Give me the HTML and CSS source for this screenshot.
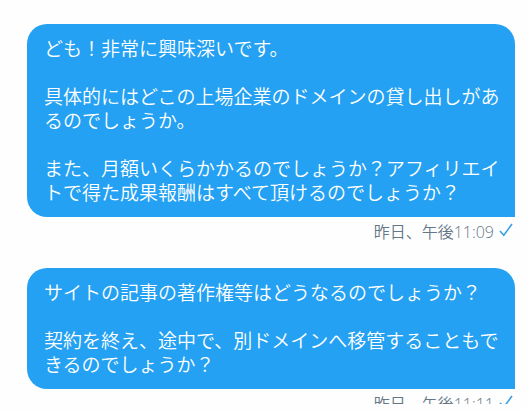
FILE: index.html
```html
<!DOCTYPE html>
<html lang="ja">
<head>
<meta charset="utf-8">
<meta name="viewport" content="width=device-width, initial-scale=1">
<title>メッセージ</title>
<link rel="stylesheet" href="styles.css">
</head>
<body>
<main class="thread">
  <article class="message">
    <div class="bubble">
      <p>ども！非常に興味深いです。</p>
      <p>具体的にはどこの上場企業のドメインの貸し出しがあるのでしょうか。</p>
      <p>また、月額いくらかかるのでしょうか？アフィリエイトで得た成果報酬はすべて頂けるのでしょうか？</p>
    </div>
    <footer class="meta">
      <time>昨日、午後<span class="clock">11:09</span></time>
      <svg class="check" viewBox="0 0 14 14" aria-hidden="true"><path d="M1 8 4.8 12.2 13 1"/></svg>
    </footer>
  </article>
  <article class="message">
    <div class="bubble">
      <p>サイトの記事の著作権等はどうなるのでしょうか？</p>
      <p>契約を終え、途中で、別ドメインへ移管することもできるのでしょうか？</p>
    </div>
    <footer class="meta">
      <time>昨日、午後<span class="clock">11:11</span></time>
      <svg class="check" viewBox="0 0 14 14" aria-hidden="true"><path d="M1 8 4.8 12.2 13 1"/></svg>
    </footer>
  </article>
</main>
</body>
</html>
```
FILE: styles.css
```css
* {
  box-sizing: border-box;
}

body {
  margin: 0;
  background: #fefefe;
  font-family: "Noto Sans CJK JP", sans-serif;
}

.thread {
  height: calc(100vh - 6px);
  overflow: hidden;
  padding: 24px 12px 0 27px;
}

.message {
  margin-bottom: 26px;
}

.bubble {
  display: grid;
  gap: 24px;
  padding: 12px 14px 13px 17px;
  border-radius: 20px 20px 0 20px;
  background: #24a1f2;
  color: #fff;
  font-size: 19px;
  font-weight: 350;
  line-height: 24px;
}

.bubble p {
  margin: 0;
}

.meta {
  display: flex;
  justify-content: flex-end;
  align-items: center;
  gap: 5px;
  margin-top: 4px;
  padding-right: 2px;
  color: #657786;
  font-size: 16px;
  font-weight: 350;
  line-height: 20px;
}

.clock {
  font-family: "Open Sans", sans-serif;
  font-weight: 350;
  font-size: 16px;
}

.check {
  width: 14px;
  height: 14px;
  margin-bottom: 3px;
  fill: none;
  stroke: #3a9fe2;
  stroke-width: 1.6;
}
```
